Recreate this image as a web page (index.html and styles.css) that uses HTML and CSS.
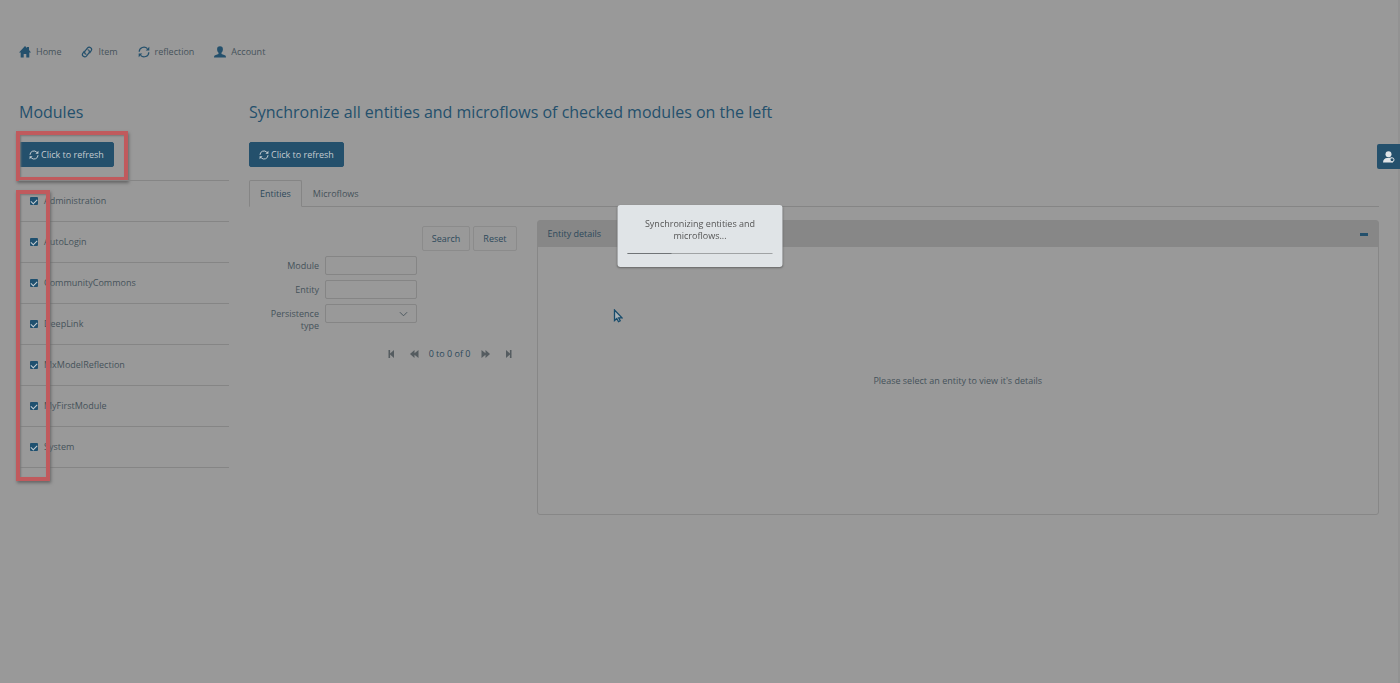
FILE: index.html
```html
<!DOCTYPE html>
<html lang="en">
<head>
<meta charset="utf-8">
<title>Model reflection</title>
<link rel="stylesheet" href="styles.css">
</head>
<body>
<svg class="sprite" aria-hidden="true">
  <symbol id="i-home" viewBox="0 0 12 12"><path d="M6 0 8 2V1h2v3l2 2.500H10.300V11.500H7.300V8H4.700v3.500H1.700V6.500H0z"/></symbol>
  <symbol id="i-link" viewBox="0 0 12 12"><g fill="none" stroke="currentColor" stroke-width="1.200" stroke-linecap="round"><path d="M5 8.200C3.500 7.700 3.300 6 4.200 4.900L6.600 1.900C8.300-.1 11.800 2.300 10.200 4.700L8.700 6.800"/><path d="M7 3.800c1.500.5 1.700 2.200.8 3.300L5.400 10.100C3.700 12.100.2 9.700 1.800 7.300L3.200 5.300"/></g></symbol>
  <symbol id="i-refresh" viewBox="0 0 12 12"><path d="M1.200 5.800A4.700 4.700 0 0 1 9.400 2.700M10.800 6.200A4.700 4.700 0 0 1 2.600 9.300" fill="none" stroke="currentColor" stroke-width="1.200"/><path d="M11.300.8v3.700H7.700zM.7 11.200V7.500h3.600z"/></symbol>
  <symbol id="i-user" viewBox="0 0 12 12"><path d="M6 .3c2 0 3 1.200 2.900 3.200C8.800 5 8.300 6 7.500 6.700v1.200l3.300 1.300c.8.300 1.200.9 1.200 2.300H0c0-1.400.4-2 1.200-2.300l3.300-1.300V6.700C3.700 6 3.200 5 3.100 3.500 3 1.500 4 .3 6 .3z"/></symbol>
  <symbol id="i-first" viewBox="0 0 10 10"><path d="M2 1h1.600v3.500L7.500 1v8L3.600 5.500V9H2z"/></symbol>
  <symbol id="i-prev" viewBox="0 0 10 10"><path d="M5 1v3.200L9 1v8L5 5.800V9L.5 5z"/></symbol>
</svg>

<nav class="nav" aria-label="Main">
  <a href="#"><svg class="icon"><use href="#i-home"/></svg>Home</a>
  <a href="#"><svg class="icon"><use href="#i-link"/></svg>Item</a>
  <a href="#"><svg class="icon"><use href="#i-refresh"/></svg>reflection</a>
  <a href="#"><svg class="icon"><use href="#i-user"/></svg>Account</a>
</nav>

<main class="row">
  <section class="col side">
    <h1>Modules</h1>
    <div class="marked">
      <button class="btn primary" type="button"><svg class="icon small"><use href="#i-refresh"/></svg>Click to refresh</button>
      <span class="mark mark-button"></span>
    </div>
    <div class="marked">
      <ul class="modules">
        <li><label><input type="checkbox" checked>Administration</label></li>
        <li><label><input type="checkbox" checked>AutoLogin</label></li>
        <li><label><input type="checkbox" checked>CommunityCommons</label></li>
        <li><label><input type="checkbox" checked>DeepLink</label></li>
        <li><label><input type="checkbox" checked>MxModelReflection</label></li>
        <li><label><input type="checkbox" checked>MyFirstModule</label></li>
        <li><label><input type="checkbox" checked>System</label></li>
      </ul>
      <span class="mark mark-list"></span>
    </div>
  </section>

  <section class="col content">
    <h1>Synchronize all entities and microflows of checked modules on the left</h1>
    <button class="btn primary" type="button"><svg class="icon small"><use href="#i-refresh"/></svg>Click to refresh</button>
    <div class="tabs" role="tablist">
      <button type="button" role="tab" class="tab active" aria-selected="true">Entities</button>
      <button type="button" role="tab" class="tab" aria-selected="false">Microflows</button>
    </div>
    <div class="row">
      <div class="col list">
        <div class="actions">
          <button class="btn" type="button">Search</button>
          <button class="btn" type="button">Reset</button>
        </div>
        <form class="filters">
          <label for="module">Module</label><input id="module" type="text">
          <label for="entity">Entity</label><input id="entity" type="text">
          <label for="ptype">Persistence type</label>
          <span class="select"><select id="ptype"><option></option></select><svg viewBox="0 0 10 6"><path d="M1 1l4 4 4-4" fill="none" stroke="currentColor"/></svg></span>
        </form>
        <div class="pager">
          <button type="button" aria-label="First"><svg><use href="#i-first"/></svg></button>
          <button type="button" aria-label="Previous"><svg><use href="#i-prev"/></svg></button>
          <span>0 to 0 of 0</span>
          <button type="button" aria-label="Next"><svg class="flip"><use href="#i-prev"/></svg></button>
          <button type="button" aria-label="Last"><svg class="flip"><use href="#i-first"/></svg></button>
        </div>
      </div>
      <div class="col details">
        <div class="panel">
          <header><span>Entity details</span><button type="button" class="collapse" aria-label="Collapse"></button></header>
          <p>Please select an entity to view it's details</p>
        </div>
      </div>
    </div>
  </section>
</main>

<button class="switcher" type="button" aria-label="Switch user"><svg viewBox="0 0 12 12"><circle cx="5.500" cy="3.300" r="3"/><path d="M0 11.500C0 8.500 2 7.200 4 7l5-.500 1 5z"/><circle cx="9" cy="8.800" r="2" fill="#24506c" stroke="#e0e4e7"/></svg></button>

<div class="progress" role="dialog" aria-label="Progress">
  <p>Synchronizing entities and microflows...</p>
  <div class="bar"><span></span></div>
</div>
<svg class="cursor" viewBox="0 0 10 14"><path d="M1.500 1v10.500l2.300-2 1.700 3.200 1.700-.9-1.600-3H9z" fill="#a9b1b6" stroke="#174b6b" stroke-width="1.300"/></svg>
</body>
</html>
```
FILE: styles.css
```css
* { box-sizing: border-box; }
body {
  margin: 0;
  padding: 0 9px;
  min-height: 100vh;
  background: #999;
  border-right: 2px solid #929292;
  color: #45525a;
  font: 9px/12px "Open Sans", sans-serif;
}
button, input, select { font: inherit; color: inherit; }
button { padding: 0; border: 0; background: none; }
.sprite { display: none; }
.icon { width: 12px; height: 12px; fill: currentColor; flex: none; }
.icon.small { width: 10px; height: 10px; }

.nav { display: flex; gap: 20px; padding: 46px 10px 42px; }
.nav a { display: flex; align-items: center; gap: 5px; color: #45525a; text-decoration: none; }
.nav .icon { color: #24506c; }

.row { display: flex; }
.col { padding: 0 10px; min-width: 0; }
.side { width: 16.6667%; }
.content { flex: 1; }
.content .row { margin: 0 -10px; padding-top: 13px; }
h1 { margin: 0 0 18px; font-size: 16px; line-height: 24px; font-weight: 400; color: #24506c; white-space: nowrap; }

.btn {
  display: inline-flex;
  align-items: center;
  gap: 2px;
  height: 25px;
  padding: 0 9px;
  border: 1px solid #8b8b8b;
  border-radius: 2px;
  color: #2d495b;
}
.btn.primary { border-color: #24506c; background: #24506c; color: #c3cbd0; }

.marked { position: relative; }
.mark { position: absolute; border: 4px solid #c05a5d; box-shadow: 1px 2px 3px #666, inset 1px 1px 2px #777; pointer-events: none; }
.mark-button { left: -3px; top: -11px; width: 112px; height: 50px; }
.mark-list { left: -3px; top: 10px; width: 34px; bottom: -13px; }

.modules { list-style: none; margin: 13px 0 0; padding: 0; border-top: 1px solid #858585; }
.modules li { height: 41px; border-bottom: 1px solid #858585; }
.modules label { display: flex; align-items: center; gap: 6px; height: 40px; padding-left: 11px; }
.modules input {
  appearance: none;
  width: 8px;
  height: 8px;
  margin: 0;
  border-radius: 1px;
  background: #1f506f;
  display: grid;
  place-items: center;
}
.modules input::after { content: ""; width: 5px; height: 3px; border: solid #c3cbd0; border-width: 0 0 1px 1px; transform: rotate(-45deg); }

.tabs { display: flex; margin-top: 13px; border-bottom: 1px solid #858585; }
.tab { height: 27px; padding: 0 10px; margin-bottom: -1px; border: 1px solid transparent; }
.tab.active { border-color: #858585 #858585 #999; border-radius: 2px 2px 0 0; background: #999; color: #2d495b; }

.list { width: 25%; }
.actions { display: flex; justify-content: flex-end; gap: 3px; padding-top: 6px; }
.filters { display: grid; grid-template-columns: 70px 92px; gap: 5px 6px; margin-top: 5px; text-align: right; }
.filters label { padding: 4px 0 0 15px; }
.filters input, .filters select {
  width: 100%;
  height: 19px;
  padding: 0 6px;
  border: 1px solid #858585;
  border-radius: 2px;
  background: transparent;
  appearance: none;
}
.select { position: relative; }
.select svg { position: absolute; right: 9px; top: 7px; width: 9px; height: 6px; pointer-events: none; }
.pager { display: flex; justify-content: flex-end; align-items: center; gap: 12px; margin-top: 16px; padding-right: 3px; }
.pager span { margin: 0 -3px; color: #2d495b; }
.pager button { display: flex; }
.pager svg { width: 11px; height: 10px; fill: #555c60; }
.pager .flip { transform: scaleX(-1); }

.details { flex: 1; }
.panel { border: 1px solid #878787; border-radius: 3px; }
.panel header { display: flex; justify-content: space-between; align-items: center; height: 26px; padding: 0 10px; background: #878787; color: #2d495b; }
.collapse { width: 8px; height: 3px; background: #24506c; }
.panel p { display: grid; place-items: center; margin: 0; min-height: 267px; }

.switcher { position: fixed; right: 0; top: 144px; width: 23px; height: 25px; display: grid; place-items: center; border-radius: 2px 0 0 2px; background: #24506c; }
.switcher svg { width: 12px; height: 12px; fill: #e0e4e7; }

.progress {
  position: fixed;
  top: 205px;
  left: 50%;
  width: 165px;
  padding: 13px 10px;
  transform: translateX(-50%);
  border-radius: 3px;
  background: #e0e4e7;
  box-shadow: 0 1px 2px #666;
  text-align: center;
}
.progress p { margin: 0 0 11px; padding: 0 10px; color: #555; }
.bar { height: 1px; background: #a0a3a5; }
.bar span { display: block; width: 30%; height: 1px; background: #707477; }
.cursor { position: fixed; left: 613px; top: 309px; width: 10px; height: 14px; }
```
